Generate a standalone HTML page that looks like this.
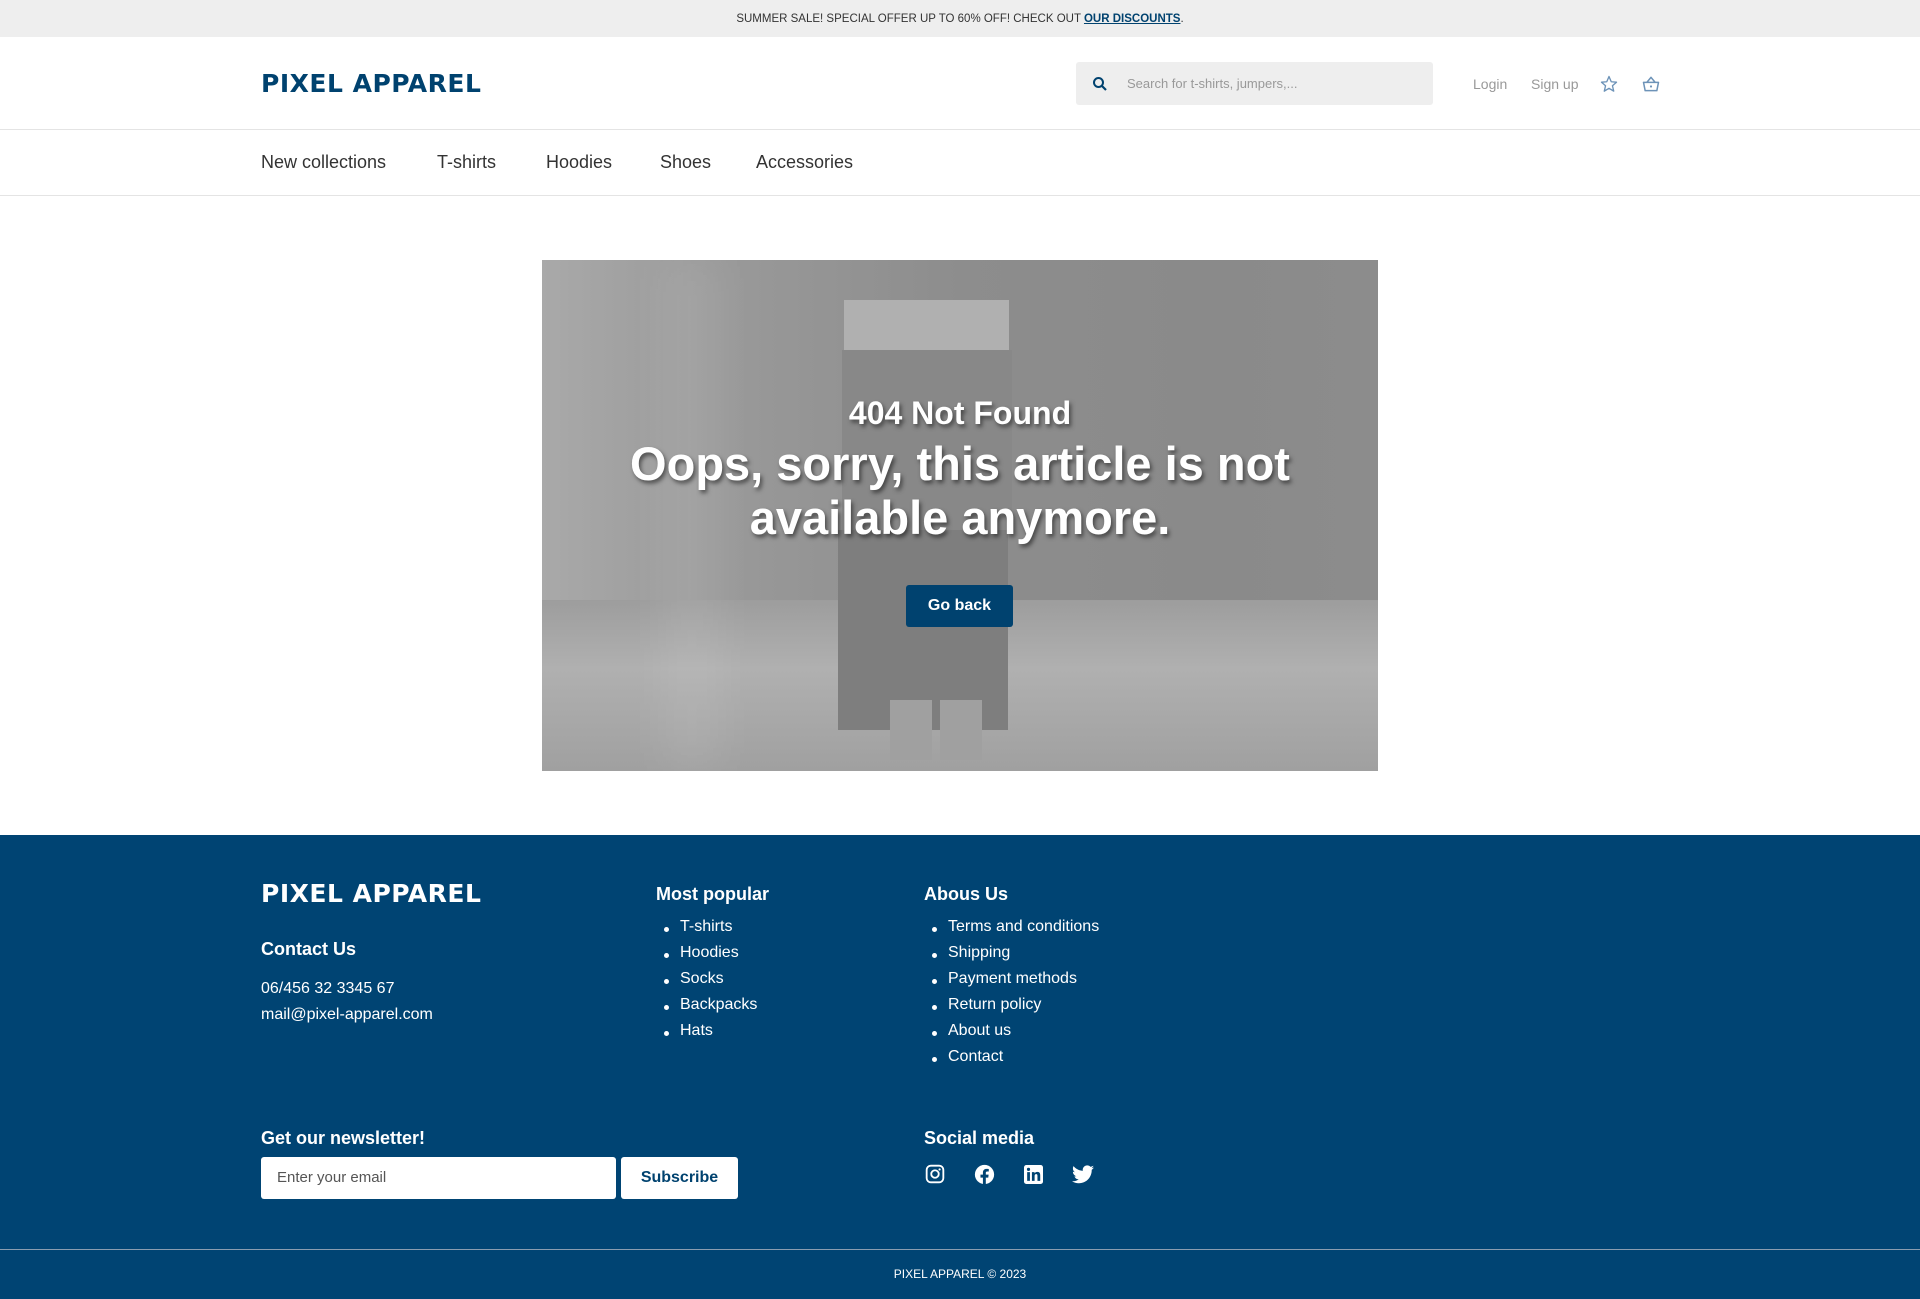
<!DOCTYPE html>
<html><head><meta charset="utf-8"><style>
*{margin:0;padding:0;box-sizing:border-box}
body{width:1920px;height:1299px;font-family:"Liberation Sans",sans-serif;background:#fff;position:relative;overflow:hidden;color:#333}
.a{position:absolute}
.top{left:0;top:0;width:1920px;height:37px;background:#eee;font-size:11.5px;color:#333;text-align:center;line-height:39px}
.top b{color:#00426f;text-decoration:underline;font-weight:bold}
.logo{font-family:"DejaVu Sans",sans-serif;font-weight:bold;letter-spacing:0.5px;font-size:25px}
.hr{left:0;width:1920px;height:1px;background:#e4e4e4}
.nav{top:152px;font-size:18px;color:#333}
.hero{left:542px;top:260px;width:836px;height:511px;overflow:hidden;background:linear-gradient(90deg,#a9a9a9 0%,#9a9a9a 20%,#8d8d8d 50%,#8a8a8a 80%,#8c8c8c 100%)}
.ht{color:#fff;text-align:center;width:836px;left:0;font-family:"Liberation Sans",sans-serif;text-shadow:2px 3px 4px rgba(0,0,0,.5);font-weight:bold}
.ft{left:0;top:835px;width:1920px;height:464px;background:#004473;color:#fff}
.fh{font-size:18px;font-weight:bold}
.li{font-size:16px}
.li div{position:relative;height:26px}
.li div:before{content:"";position:absolute;left:-16px;top:9px;width:5px;height:5px;border-radius:50%;background:#fff}
</style></head><body>
<div class="a top">SUMMER SALE! SPECIAL OFFER UP TO 60% OFF! CHECK OUT <b>OUR DISCOUNTS</b>.</div>
<div class="a logo" style="left:261px;top:69px;color:#00426f">PIXEL APPAREL</div>
<div class="a" style="left:1076px;top:62px;width:357px;height:43px;background:#eee;border-radius:3px"></div>
<svg class="a" style="left:1092px;top:76px" width="16" height="16" viewBox="0 0 16 16"><circle cx="6.5" cy="6.5" r="4.5" fill="none" stroke="#00426f" stroke-width="2"/><path d="M10 10l4 4" stroke="#00426f" stroke-width="2.2"/></svg>
<div class="a" style="left:1127px;top:76px;font-size:13px;color:#999">Search for t-shirts, jumpers,...</div>
<div class="a" style="left:1473px;top:76px;font-size:14px;color:#999">Login</div>
<div class="a" style="left:1531px;top:76px;font-size:14px;color:#999">Sign up</div>
<svg class="a" style="left:1600px;top:75px" width="18" height="18" viewBox="0 0 24 24"><path d="M12 2l3 7 7 .6-5.4 4.7 1.7 7.2L12 17.7 5.7 21.5l1.7-7.2L2 9.6 9 9z" fill="none" stroke="#6d93b8" stroke-width="1.8" stroke-linejoin="round"/></svg>
<svg class="a" style="left:1641px;top:74px" width="20" height="20" viewBox="0 0 24 24"><path d="M3 10h18l-2 10H5z M7 10l5-6 5 6" fill="none" stroke="#6d93b8" stroke-width="1.8" stroke-linejoin="round"/><circle cx="12" cy="15" r="1.3" fill="#6d93b8"/></svg>
<div class="a hr" style="top:129px"></div>
<div class="a nav" style="left:261px">New collections</div>
<div class="a nav" style="left:437px">T-shirts</div>
<div class="a nav" style="left:546px">Hoodies</div>
<div class="a nav" style="left:660px">Shoes</div>
<div class="a nav" style="left:756px">Accessories</div>
<div class="a hr" style="top:195px"></div>
<div class="a hero">
 <div class="a" style="left:0;top:340px;width:836px;height:171px;background:linear-gradient(180deg,#9d9d9d,#b0b0b0 40%,#a0a0a0)"></div>
 <div class="a" style="left:120px;top:0;width:60px;height:511px;background:rgba(255,255,255,.08);filter:blur(20px)"></div>
 <div class="a" style="left:302px;top:40px;width:165px;height:55px;background:#b0b0b0"></div>
 <div class="a" style="left:300px;top:90px;width:170px;height:180px;background:#888"></div>
 <div class="a" style="left:296px;top:270px;width:170px;height:200px;background:#7e7e7e"></div>
 <div class="a" style="left:348px;top:440px;width:42px;height:60px;background:#a0a0a0"></div>
 <div class="a" style="left:398px;top:440px;width:42px;height:60px;background:#a0a0a0"></div>
 <div class="a ht" style="top:135px;font-size:32px">404 Not Found</div>
 <div class="a ht" style="top:177px;font-size:47px;line-height:54px;padding:0 70px">Oops, sorry, this article is not available anymore.</div>
 <div class="a" style="left:364px;top:325px;width:107px;height:42px;background:#00426f;border-radius:3px;color:#fff;font-weight:bold;font-size:16px;text-align:center;line-height:42px">Go back</div>
</div>
<div class="a ft">
 <div class="a logo" style="left:261px;top:44px;color:#fff">PIXEL APPAREL</div>
 <div class="a fh" style="left:261px;top:104px">Contact Us</div>
 <div class="a li" style="left:261px;top:141px;line-height:26px">06/456 32 3345 67<br>mail@pixel-apparel.com</div>
 <div class="a fh" style="left:656px;top:49px">Most popular</div>
 <div class="a li" style="left:680px;top:83px"><div>T-shirts</div><div>Hoodies</div><div>Socks</div><div>Backpacks</div><div>Hats</div></div>
 <div class="a fh" style="left:924px;top:49px">Abous Us</div>
 <div class="a li" style="left:948px;top:83px"><div>Terms and conditions</div><div>Shipping</div><div>Payment methods</div><div>Return policy</div><div>About us</div><div>Contact</div></div>
 <div class="a fh" style="left:261px;top:293px">Get our newsletter!</div>
 <div class="a" style="left:261px;top:322px;width:355px;height:42px;background:#fff;border-radius:3px;color:#555;font-size:15px;line-height:42px;padding-left:16px">Enter your email</div>
 <div class="a" style="left:621px;top:322px;width:117px;height:42px;background:#fff;border-radius:3px;color:#00426f;font-weight:bold;font-size:16px;line-height:42px;text-align:center">Subscribe</div>
 <div class="a fh" style="left:924px;top:293px">Social media</div>
 <svg class="a" style="left:925px;top:329px" width="20" height="20" viewBox="0 0 24 24"><rect x="2" y="2" width="20" height="20" rx="5" fill="none" stroke="#fff" stroke-width="2.2"/><circle cx="12" cy="12" r="4.5" fill="none" stroke="#fff" stroke-width="2.2"/><circle cx="17.5" cy="6.5" r="1.3" fill="#fff"/></svg>
 <svg class="a" style="left:974px;top:329px" width="21" height="21" viewBox="0 0 24 24"><circle cx="12" cy="12" r="11" fill="#fff"/><path d="M13.5 24v-8.5h2.8l.4-3.3h-3.2v-2c0-1 .3-1.6 1.7-1.6h1.7V5.7c-.3 0-1.3-.1-2.5-.1-2.5 0-4.2 1.5-4.2 4.3v2.3H7.4v3.3h2.8V24z" fill="#004473"/></svg>
 <svg class="a" style="left:1024px;top:330px" width="19" height="19" viewBox="0 0 24 24"><rect x="0" y="0" width="24" height="24" rx="3" fill="#fff"/><rect x="4" y="9" width="3.5" height="11" fill="#004473"/><circle cx="5.7" cy="5.5" r="2" fill="#004473"/><path d="M10 9h3.3v1.6c.6-1 1.8-1.9 3.6-1.9 3 0 3.6 2 3.6 4.6V20H17v-5.8c0-1.3-.1-2.6-1.700-2.6s-1.9 1.2-1.9 2.5V20H10z" fill="#004473"/></svg>
 <svg class="a" style="left:1072px;top:330px" width="22" height="19" viewBox="0 0 24 20"><path d="M24 2.4c-.9.4-1.8.7-2.8.8 1-.6 1.8-1.6 2.2-2.7-1 .6-2 1-3.1 1.2C19.3.7 18 0 16.6 0c-2.7 0-4.9 2.2-4.9 4.9 0 .4 0 .8.1 1.1C7.7 5.8 4.1 3.900 1.7.9c-.4.7-.7 1.6-.7 2.5 0 1.7.9 3.2 2.2 4.1-.8 0-1.6-.2-2.2-.6v.1c0 2.4 1.7 4.4 3.9 4.8-.4.1-.8.2-1.3.2-.3 0-.6 0-.9-.1.6 2 2.4 3.4 4.6 3.4-1.7 1.3-3.8 2.1-6.1 2.1-.4 0-.8 0-1.2-.1 2.2 1.4 4.8 2.2 7.5 2.2 9.1 0 14-7.5 14-14v-.6c1-.7 1.8-1.6 2.5-2.5z" fill="#fff"/></svg>
 <div class="a" style="left:0;top:414px;width:1920px;height:1px;background:#8a9db0"></div>
 <div class="a" style="left:0;top:432px;width:1920px;text-align:center;font-size:12px">PIXEL APPAREL © 2023</div>
</div>
</body></html>
